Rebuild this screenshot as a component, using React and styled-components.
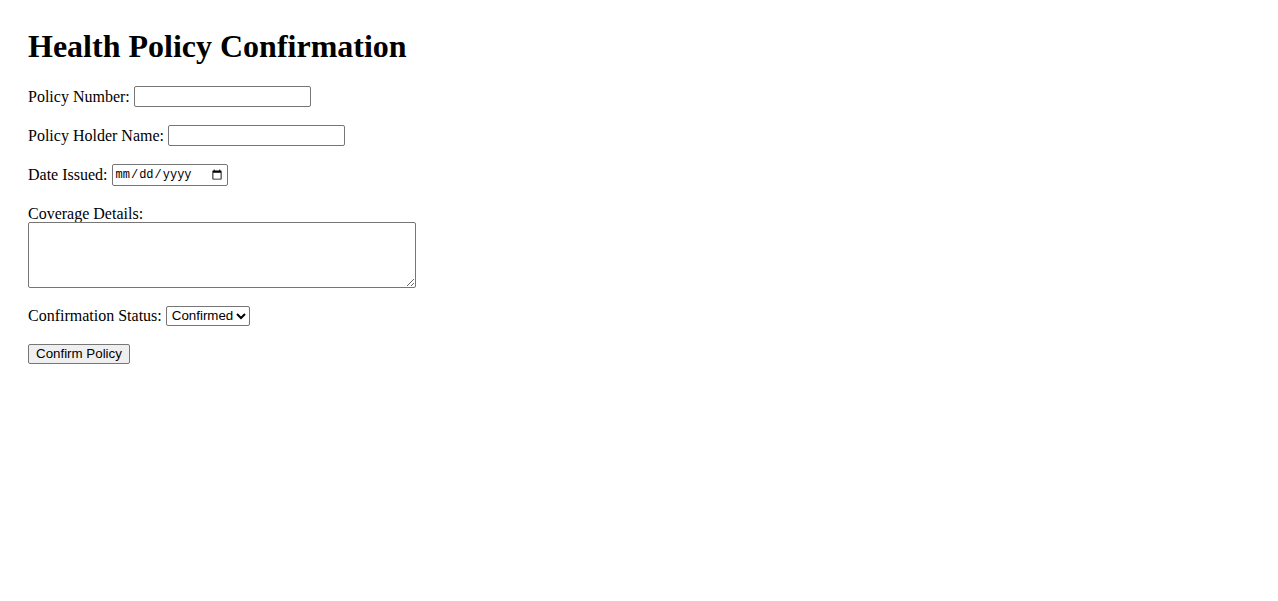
import React, { useState } from "react";
import styled, { createGlobalStyle } from "styled-components";

const GlobalStyle = createGlobalStyle`
    html, body {
        margin: 0;
        padding: 0;
        background: #ffffff;
    }
    body {
        font-family: "Liberation Serif", "Times New Roman", serif;
        font-size: 16px;
        color: #000000;
    }
`;

const Page = styled.div`
    padding: 28px;
`;

const Title = styled.h1`
    margin: 0 0 20px;
    font-size: 32px;
    font-weight: bold;
    line-height: 37px;
`;

const Form = styled.form`
    display: flex;
    flex-direction: column;
    align-items: flex-start;
    gap: 16px;
`;

const Row = styled.div`
    display: flex;
    flex-direction: ${props => (props.stacked ? "column" : "row")};
    align-items: ${props => (props.stacked ? "flex-start" : "center")};
    gap: ${props => (props.stacked ? "0" : "4px")};
    min-height: ${props => props.minHeight || "23px"};
`;

const Label = styled.label`
    line-height: 18px;
    padding-top: ${props => (props.stacked ? "3px" : "0")};
`;

const TextInput = styled.input`
    box-sizing: border-box;
    width: 177px;
    height: 21px;
    padding: 1px 2px;
    border: 1px solid #767676;
    border-radius: 2px;
    font-family: "Liberation Sans", Arial, sans-serif;
    font-size: 13.33px;
    background: #fff;
`;

const DateInput = styled(TextInput)`
    width: 116px;
    height: 22px;
    font-family: "Liberation Mono", "Courier New", monospace;
    font-size: 12px;
`;

const TextArea = styled.textarea`
    box-sizing: border-box;
    width: 388px;
    height: 66px;
    margin: -1px 0 0;
    padding: 2px;
    border: 1px solid #767676;
    border-radius: 2px;
    font-family: "Liberation Mono", monospace;
    font-size: 13.33px;
`;

const Select = styled.select`
    box-sizing: border-box;
    height: 20px;
    width: 84px;
    padding: 0 0 0 1px;
    border: 1px solid #767676;
    border-radius: 2px;
    background: #fff;
    font-family: "Liberation Sans", Arial, sans-serif;
    font-size: 13.33px;
    color: #000;
`;

const Button = styled.button`
    box-sizing: border-box;
    height: 20px;
    padding: 1px 7px;
    border: 1px solid #767676;
    border-radius: 2px;
    background: #efefef;
    font-family: "Liberation Sans", Arial, sans-serif;
    font-size: 13.33px;
    color: #000;
`;

export default function App() {
    const [form, setForm] = useState({
        number: "",
        holder: "",
        date: "",
        details: "",
        status: "confirmed",
    });

    const update = key => e => setForm({ ...form, [key]: e.target.value });

    return (
        <Page>
            <GlobalStyle />
            <Title>Health Policy Confirmation</Title>
            <Form onSubmit={e => e.preventDefault()}>
                <Row>
                    <Label htmlFor="number">Policy Number:</Label>
                    <TextInput id="number" type="text" value={form.number} onChange={update("number")} />
                </Row>
                <Row>
                    <Label htmlFor="holder">Policy Holder Name:</Label>
                    <TextInput id="holder" type="text" value={form.holder} onChange={update("holder")} />
                </Row>
                <Row>
                    <Label htmlFor="date">Date Issued:</Label>
                    <DateInput id="date" type="date" value={form.date} onChange={update("date")} />
                </Row>
                <Row stacked>
                    <Label stacked htmlFor="details">Coverage Details:</Label>
                    <TextArea id="details" value={form.details} onChange={update("details")} />
                </Row>
                <Row>
                    <Label htmlFor="status">Confirmation Status:</Label>
                    <Select id="status" value={form.status} onChange={update("status")}>
                        <option value="confirmed">Confirmed</option>
                        <option value="pending">Pending</option>
                        <option value="rejected">Rejected</option>
                    </Select>
                </Row>
                <Row minHeight="21px">
                    <Button type="submit">Confirm Policy</Button>
                </Row>
            </Form>
        </Page>
    );
}
